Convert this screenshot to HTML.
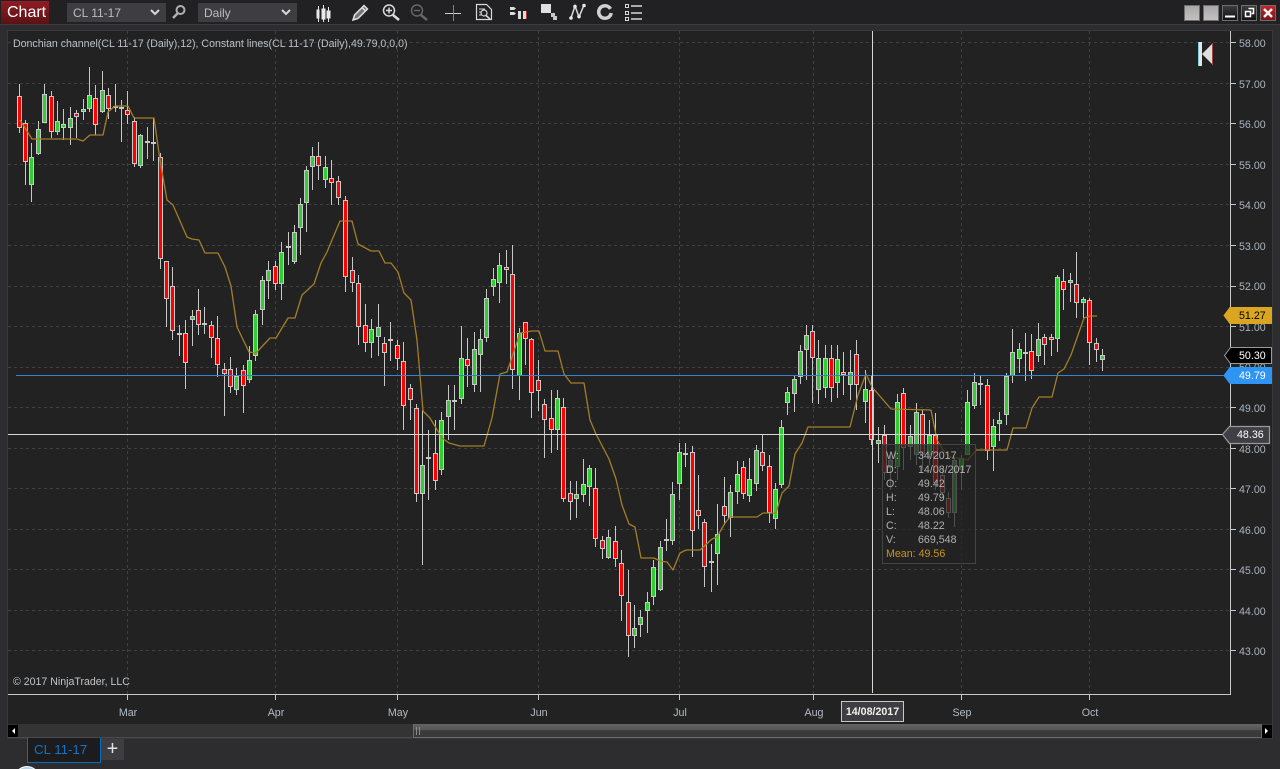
<!DOCTYPE html>
<html><head><meta charset="utf-8"><title>Chart</title>
<style>
html,body{margin:0;padding:0;background:#2d2d30;width:1280px;height:769px;overflow:hidden;font-family:"Liberation Sans",Arial,sans-serif}
div{position:absolute;box-sizing:border-box}
#bar{left:0;top:0;width:1280px;height:24px;background:#212123}
#sep{left:0;top:24px;width:1280px;height:1px;background:#3d3d40}
#panel{left:7px;top:30px;width:1266px;height:709px;background:#222;border:1px solid #38383b}
svg{position:absolute;left:0;top:0}
.t{position:absolute;white-space:nowrap;font-size:10.6px;line-height:14px;color:#b4bcc4}
.dd{background:#3e3e42;height:19px;top:3px;width:99px;color:#bdbdc0;font-size:12px;line-height:20px;padding-left:6px}
.win{top:5px;width:16px;height:16px;border:1px solid #6e6e6e}
.ax{position:absolute;left:1239px;font-size:10.67px;line-height:14px;color:#a8b4bf;white-space:nowrap}
.xl{position:absolute;top:706px;width:50px;text-align:center;font-size:10.67px;line-height:14px;color:#b4bcc4}
.tt{position:absolute;left:886px;font-size:10.67px;line-height:14px;color:#b0b0b0;white-space:nowrap}
.tt b{position:absolute;left:32px;font-weight:normal}
</style></head><body>
<div id="bar"></div><div id="sep"></div>
<div style="left:1px;top:1px;width:48px;height:23px;background:linear-gradient(#8f1c22,#5a1216);color:#fff;font-size:16px;line-height:24px;padding-left:6px">Chart</div>
<div class="dd" style="left:67px">CL 11-17</div>
<div class="dd" style="left:198px">Daily</div>
<div id="panel"></div>

<svg width="1280" height="769" viewBox="0 0 1280 769" fill="none">
<path d="M151 10l4 4 4-4M282 10l4 4 4-4" stroke="#d8d8d8" stroke-width="2"/>
<circle cx="180.5" cy="10" r="4" stroke="#b0b0b0" stroke-width="2"/><path d="M177.5 13.5l-4.5 4.500" stroke="#b0b0b0" stroke-width="2.5"/>
<path d="M318.5 6v16M323.5 5v17M328.5 7v15" stroke="#e8e8e8"/><path d="M316.5 9.5h3v9h-3zM321.5 8.5h4v11h-4zM326.5 10.5h4v8h-4z" fill="#e8e8e8"/>
<path d="M353 20l1.5-5L364 5.5l3.5 3.5-9.5 9.500zM362 7.5l3.5 3.500" stroke="#e0e0e0" stroke-width="1.5" fill="#777"/>
<circle cx="389" cy="10.5" r="5.5" stroke="#dcdcdc" stroke-width="1.5"/><path d="M393 15l6 5" stroke="#dcdcdc" stroke-width="2.5"/><path d="M386 10.5h6M389 7.5v6" stroke="#dcdcdc" stroke-width="1.5"/>
<circle cx="417" cy="10.5" r="5.5" stroke="#666" stroke-width="1.5"/><path d="M421 15l6 5" stroke="#666" stroke-width="2.5"/><path d="M414 10.5h6" stroke="#666" stroke-width="1.5"/>
<path d="M445 13.5h16" stroke="#d0d0d0"/><path d="M453.5 5v16" stroke="#4f8fd0"/>
<path d="M476.5 4.5h10l5 5v10h-15z" stroke="#d8d8d8" stroke-width="1.2"/><circle cx="484" cy="13" r="3" stroke="#d8d8d8" stroke-width="1.2"/><path d="M486 15.5l4 3.5" stroke="#d8d8d8" stroke-width="1.5"/><path d="M479 9h6M479 12h2M479 15h2" stroke="#d8d8d8"/>
<path d="M510 7h4l2 1.500-2 1.500h-4zM510 12h4l2 1.500-2 1.500h-4z" fill="#dcdcdc"/><path d="M518 11h3v8h-3zM523 11h3v8h-3z" fill="#dcdcdc"/><path d="M526 11h1v8h-1z" fill="#b83030"/>
<path d="M541 4h10v9h-10z" fill="#e0e0e0"/><path d="M551 13h4v4h-4zM553 16h4v4h-4z" fill="#c8c8c8"/>
<path d="M571 18l4-12 4 11 5-12" stroke="#d8d8d8" stroke-width="1.5"/><circle cx="571" cy="18" r="1.8" fill="#e8e8e8"/><circle cx="575" cy="6.5" r="1.8" fill="#e8e8e8"/><circle cx="579" cy="16.5" r="1.8" fill="#e8e8e8"/><circle cx="584" cy="5.5" r="1.8" fill="#e8e8e8"/>
<circle cx="605" cy="12" r="6.3" stroke="#d0d0d0" stroke-width="3.5" stroke-dasharray="35 4.6" transform="rotate(10 605 12)"/>
<path d="M625.5 4.5h3v3h-3zM625.5 11.5h3v3h-3zM625.5 17.5h3v3h-3z" stroke="#d8d8d8"/><path d="M631 6h11M631 13h11M631 19h11" stroke="#d8d8d8" stroke-width="1.5"/>
<path id="grid" stroke="#404040" stroke-dasharray="3 3" d="M8 42.5H1230M8 83.5H1230M8 123.5H1230M8 164.5H1230M8 204.5H1230M8 245.5H1230M8 286.5H1230M8 326.5H1230M8 367.5H1230M8 407.5H1230M8 448.5H1230M8 488.5H1230M8 529.5H1230M8 569.5H1230M8 610.5H1230M8 650.5H1230M127.5 31V694M275.5 31V694M397.5 31V694M538.5 31V694M679.5 31V694M813.5 31V694M961.5 31V694M1089.5 31V694"/>
<path d="M8 694.5H1230.5V31" stroke="#c8c8c8"/>
<path d="M127.5 694v6M275.5 694v6M397.5 694v6M538.5 694v6M679.5 694v6M813.5 694v6M961.5 694v6M1089.5 694v6M1230 42.5h6M1230 83.5h6M1230 123.5h6M1230 164.5h6M1230 204.5h6M1230 245.5h6M1230 286.5h6M1230 326.5h6M1230 407.5h6M1230 448.5h6M1230 488.5h6M1230 529.5h6M1230 569.5h6M1230 610.5h6M1230 650.5h6" stroke="#c8c8c8"/>
<g id="candles"></g>
<path stroke="#a37e26" stroke-width="1.300" stroke-linejoin="round" d="M20 120L25 128L32 139L77 139L83 141L90 135L103 135L108 112L115 106L128 106L134 118L154 118L160 160L167 200L173 205L187 237L192 239L199 240L205 253L218 253L225 267L231 286L237 327L249 352L256 353L270 338L276 338L288 318L295 318L302 295L314 284L321 263L327 252L332 240L340 221L352 221L358 244L371 251L379 251L385 263L391 263L398 272L404 293L411 300L417 340L423 411L430 418L442 438L449 443L460 446L484 446L492 418L500 374L507 372L520 333L532 331L539 331L545 351L558 351L564 374L571 383L584 383L590 420L596 434L609 459L616 479L622 505L629 524L635 527L641 558L654 558L660 561L667 562L673 570L680 553L686 550L700 550L712 539L717 537L725 523L730 517L757 517L763 513L776 513L782 493L789 486L795 454L802 443L808 427L850 427L858 395L866 374L872 387L891 409L931 410L937 440L943 450L950 457L957 458L968 460L976 450L1007 450L1013 428L1026 428L1032 408L1039 397L1052 397L1058 373L1064 369L1071 355L1084 318L1090 316L1097 316"/>
<path d="M16 375.5H1224" stroke="#3a82cc"/>
<path d="M8 434.5H1223" stroke="#d8d8d8"/>
<path d="M872.5 31V693" stroke="#d8d8d8"/>
<path d="M1198 42h4v24h-4z" fill="#e6e6e6"/><path d="M1198 42h1v24h-1z" fill="#7fd0e0"/><path d="M1213 43v22l-11-11z" fill="#dedede"/><path d="M1212.5 43v22" stroke="#a84040"/>
</svg>

<div class="t" style="left:13px;top:37px;color:#b9c1c8">Donchian channel(CL 11-17 (Daily),12), Constant lines(CL 11-17 (Daily),49.79,0,0,0)</div>
<div class="t" style="left:13px;top:675px;color:#c0c4c8">© 2017 NinjaTrader, LLC</div>

<span class="ax" style="top:37px">58.00</span><span class="ax" style="top:78px">57.00</span><span class="ax" style="top:118px">56.00</span><span class="ax" style="top:159px">55.00</span><span class="ax" style="top:199px">54.00</span><span class="ax" style="top:240px">53.00</span><span class="ax" style="top:280px">52.00</span><span class="ax" style="top:321px">51.00</span><span class="ax" style="top:361px">50.00</span><span class="ax" style="top:402px">49.00</span><span class="ax" style="top:443px">48.00</span><span class="ax" style="top:483px">47.00</span><span class="ax" style="top:524px">46.00</span><span class="ax" style="top:564px">45.00</span><span class="ax" style="top:605px">44.00</span><span class="ax" style="top:645px">43.00</span>

<span class="xl" style="left:103px">Mar</span><span class="xl" style="left:251px">Apr</span><span class="xl" style="left:373px">May</span><span class="xl" style="left:514px">Jun</span><span class="xl" style="left:655px">Jul</span><span class="xl" style="left:789px">Aug</span><span class="xl" style="left:937px">Sep</span><span class="xl" style="left:1065px">Oct</span>

<svg width="1280" height="769" viewBox="0 0 1280 769" fill="none" style="pointer-events:none">
<path d="M1224 315.5l6-8h41.500v16H1230z" fill="#daa520" stroke="#daa520"/>
<path d="M1224.5 355.5l6-8h41v16h-41z" fill="#000" stroke="#9a9a9a"/>
<path d="M1224 375.5l6-8h41.500v16H1230z" fill="#2f95f5" stroke="#2f95f5"/>
<path d="M1222.5 434.5l7-8h40v17h-40z" fill="#3f3f45" stroke="#9a9a9a" stroke-width="1.2"/>
</svg>
<span class="ax" style="top:309px;color:#000">51.27</span>
<span class="ax" style="top:349px;color:#fff">50.30</span>
<span class="ax" style="top:369px;color:#fff">49.79</span>
<span class="ax" style="top:428px;left:1237px;color:#fff">48.36</span>

<div style="left:882px;top:444px;width:94px;height:120px;background:rgba(34,34,34,.72);border:1px solid #444"></div>
<span class="tt" style="top:449px">W:<b>34/2017</b></span>
<span class="tt" style="top:463px">D:<b>14/08/2017</b></span>
<span class="tt" style="top:477px">O:<b>49.42</b></span>
<span class="tt" style="top:491px">H:<b>49.79</b></span>
<span class="tt" style="top:505px">L:<b>48.06</b></span>
<span class="tt" style="top:519px">C:<b>48.22</b></span>
<span class="tt" style="top:533px">V:<b>669,548</b></span>
<span class="tt" style="top:547px;color:#c8951e">Mean: 49.56</span>

<div style="left:841px;top:701px;width:63px;height:21px;background:#3e3e42;border:1px solid #c8c8c8;color:#f0f0f0;font-size:10.67px;font-weight:bold;line-height:20px;text-align:center">14/08/2017</div>

<div style="left:8px;top:724px;width:1264px;height:14px;background:#343434;border-bottom:1px solid #4a4a4a"></div>
<div style="left:8px;top:725px;width:10px;height:12px;background:#000"></div>
<div style="left:1262px;top:725px;width:10px;height:13px;background:#000"></div>
<div style="left:413px;top:724px;width:849px;height:14px;background:linear-gradient(#646464 0,#555 45%,#3a3a3a 50%,#3a3a3a 100%);border:1px solid #6a6a6a;border-top:0"></div>
<svg width="1280" height="769" viewBox="0 0 1280 769" style="pointer-events:none">
<path d="M15 728v6l-3-3zM1265 728v6l3-3z" fill="#fff"/>
<path d="M416.5 727v8M419.5 727v8" stroke="#888"/>
<circle cx="27" cy="779" r="12.5" fill="#b8d4e8" stroke="#fff"/>
</svg>
<div style="left:27px;top:738px;width:74px;height:25px;background:#1c1c1e;border:1px solid #0a6cbd;border-top:0;color:#1274c4;font-size:13.3px;line-height:24px;padding-left:6px">CL 11-17</div>
<div style="left:101px;top:739px;width:23px;height:21px;background:#3e3e42;color:#e4e4e4;font-size:20px;line-height:20px;text-align:center">+</div>
<div class="win" style="left:1184px;background:linear-gradient(#a8a8a8,#c4c0c0)"></div>
<div class="win" style="left:1203px;background:linear-gradient(#a8a8a8,#c4c0c0)"></div>
<div class="win" style="left:1222px;background:linear-gradient(#3c3c3c,#111)"></div>
<div class="win" style="left:1241px;background:linear-gradient(#3c3c3c,#111)"></div>
<div class="win" style="left:1260px;background:linear-gradient(#c2262c,#7a141a)"></div>
<svg width="1280" height="769" viewBox="0 0 1280 769" style="pointer-events:none" fill="none">
<path d="M1225 16.5h10" stroke="#fff" stroke-width="2"/>
<path d="M1248.5 8.5h5v5h-2M1245.5 11.5h5v5h-5z" stroke="#fff" stroke-width="1.5"/>
<path d="M1264 9l8 8M1272 9l-8 8" stroke="#f4f0f0" stroke-width="2.5"/>
</svg>

<script>
var D=[[19,84,96,128,133,'r'],[25,120,123,162,185,'r'],[31,143,157,185,202,'g'],[38,121,129,154,155,'g'],[44,84,94,123,123,'g'],[51,91,96,132,138,'r'],[57,101,121,132,135,'g'],[63,109,124,128,140,'g'],[70,107,118,128,145,'g'],[76,110,113,117,138,'r'],[83,99,109,112,120,'g'],[89,67,95,109,112,'g'],[95,85,98,125,135,'r'],[102,71,90,112,113,'g'],[108,88,95,109,119,'r'],[115,84,106,107,112,'d'],[121,100,107,108,142,'r'],[127,91,110,115,124,'r'],[134,117,121,164,167,'r'],[140,134,135,166,168,'g'],[147,127,141,142,159,'d'],[153,118,142,144,161,'d'],[160,153,157,259,269,'r'],[166,261,261,299,327,'r'],[172,267,286,331,340,'r'],[179,325,333,335,356,'r'],[185,320,333,363,389,'r'],[192,310,316,320,346,'g'],[198,289,310,325,335,'r'],[204,307,323,324,334,'d'],[211,321,325,338,358,'r'],[217,316,338,365,377,'r'],[224,363,369,374,416,'r'],[230,357,369,387,393,'r'],[236,368,376,390,395,'g'],[243,365,370,386,413,'r'],[249,346,360,380,383,'g'],[255,310,314,356,361,'g'],[262,276,280,310,325,'g'],[268,261,270,281,299,'g'],[275,261,266,284,290,'r'],[281,242,252,284,300,'g'],[288,232,246,248,265,'r'],[294,225,232,262,264,'g'],[300,198,204,228,255,'g'],[306,166,170,203,232,'g'],[312,147,156,167,190,'g'],[318,142,156,166,180,'r'],[325,156,167,180,188,'g'],[331,160,178,183,205,'r'],[338,176,181,198,205,'r'],[345,196,200,277,292,'r'],[352,257,270,283,292,'r'],[358,275,283,327,345,'r'],[365,304,325,343,352,'r'],[371,319,329,343,358,'g'],[378,304,327,337,356,'g'],[384,337,343,353,386,'r'],[390,322,339,341,361,'g'],[397,340,345,359,370,'r'],[403,342,361,406,430,'r'],[410,384,388,400,420,'r'],[416,404,408,494,502,'r'],[422,410,465,494,565,'g'],[428,430,457,458,500,'d'],[435,420,453,481,490,'r'],[441,412,420,470,475,'g'],[448,385,400,417,440,'g'],[454,385,400,401,430,'d'],[461,326,358,399,404,'g'],[467,338,359,366,387,'r'],[474,332,349,385,392,'g'],[480,329,339,355,392,'g'],[486,289,298,338,342,'g'],[493,268,279,287,296,'g'],[499,253,265,283,303,'g'],[506,250,267,270,284,'r'],[512,245,274,370,389,'r'],[519,328,333,376,400,'g'],[525,322,322,339,365,'r'],[531,338,339,393,418,'r'],[538,360,380,391,411,'r'],[544,399,404,420,458,'r'],[551,390,418,430,453,'r'],[557,390,398,430,450,'g'],[563,398,407,499,502,'r'],[570,481,493,502,520,'r'],[576,481,494,499,518,'g'],[583,459,484,495,502,'g'],[589,465,468,487,506,'g'],[595,468,488,539,547,'r'],[602,536,540,549,559,'r'],[608,530,537,558,559,'g'],[615,526,541,559,567,'r'],[621,550,563,596,621,'r'],[628,570,602,636,657,'r'],[634,605,628,636,648,'g'],[640,610,617,625,637,'g'],[647,592,602,611,633,'g'],[653,560,567,597,605,'g'],[660,541,547,590,591,'g'],[666,519,539,541,551,'g'],[672,482,494,541,545,'g'],[679,443,452,484,500,'g'],[685,443,453,454,467,'d'],[692,446,452,531,557,'r'],[698,475,510,516,529,'r'],[704,519,522,567,587,'r'],[711,544,561,562,592,'d'],[717,504,534,554,585,'g'],[724,477,506,516,525,'r'],[730,485,492,518,537,'g'],[737,461,474,492,504,'g'],[743,461,467,494,499,'r'],[749,458,479,496,502,'g'],[756,445,450,484,491,'g'],[762,434,452,466,471,'r'],[769,455,466,513,523,'r'],[775,483,489,519,529,'g'],[781,420,427,485,488,'g'],[787,387,392,403,415,'g'],[794,376,379,394,412,'g'],[800,345,351,377,384,'g'],[806,325,335,350,380,'g'],[812,325,331,358,403,'r'],[818,340,358,390,404,'g'],[825,345,358,388,398,'g'],[831,345,358,388,402,'r'],[837,345,359,383,398,'g'],[843,352,372,375,395,'r'],[850,350,372,385,400,'g'],[856,340,354,385,410,'r'],[865,370,389,402,423,'g'],[871,376,390,440,445,'r'],[878,427,440,444,463,'g'],[884,425,435,473,480,'r'],[890,455,460,468,490,'g'],[897,394,402,467,480,'g'],[903,388,393,448,470,'r'],[910,425,436,447,460,'g'],[916,403,412,455,465,'g'],[922,410,414,455,470,'r'],[929,420,435,455,465,'g'],[935,413,435,483,490,'r'],[942,468,475,493,498,'r'],[948,492,498,513,518,'r'],[954,457,460,513,527,'g'],[961,455,458,470,490,'g'],[967,390,402,455,455,'g'],[974,373,382,406,409,'g'],[980,376,383,385,405,'r'],[987,379,385,451,460,'r'],[993,419,426,447,471,'g'],[999,412,420,424,441,'g'],[1006,373,376,415,425,'g'],[1012,329,352,376,383,'g'],[1019,343,349,359,373,'g'],[1025,333,352,353,381,'d'],[1031,334,351,371,379,'r'],[1038,323,339,356,362,'g'],[1044,334,337,345,365,'r'],[1051,334,337,340,356,'r'],[1057,275,277,339,352,'g'],[1063,269,281,290,310,'r'],[1070,273,280,283,302,'g'],[1076,252,284,303,318,'r'],[1083,297,299,303,318,'g'],[1089,298,300,343,365,'r'],[1096,338,343,350,362,'r'],[1102,349,355,360,371,'g']];
var s='<path stroke="#c8c8c8" d="';
D.forEach(function(c){s+='M'+(c[0]+.5)+' '+c[1]+'V'+c[4]});
s+='"/>';
D.forEach(function(c){
 var h=c[3]-c[2]-1;
 if(c[5]=='d'){s+='<rect x="'+(c[0]-2)+'" y="'+c[2]+'" width="5" height="2" fill="#c8c8c8"/>';return;}
 if(h<1)h=1;
 s+='<rect x="'+(c[0]-1.5)+'" y="'+(c[2]+.5)+'" width="4" height="'+h+'" fill="'+(c[5]=='r'?'#ff0000':'#32cd32')+'" stroke="#c8c8c8"/>';
});
document.getElementById('candles').innerHTML=s;
</script>
</body></html>
